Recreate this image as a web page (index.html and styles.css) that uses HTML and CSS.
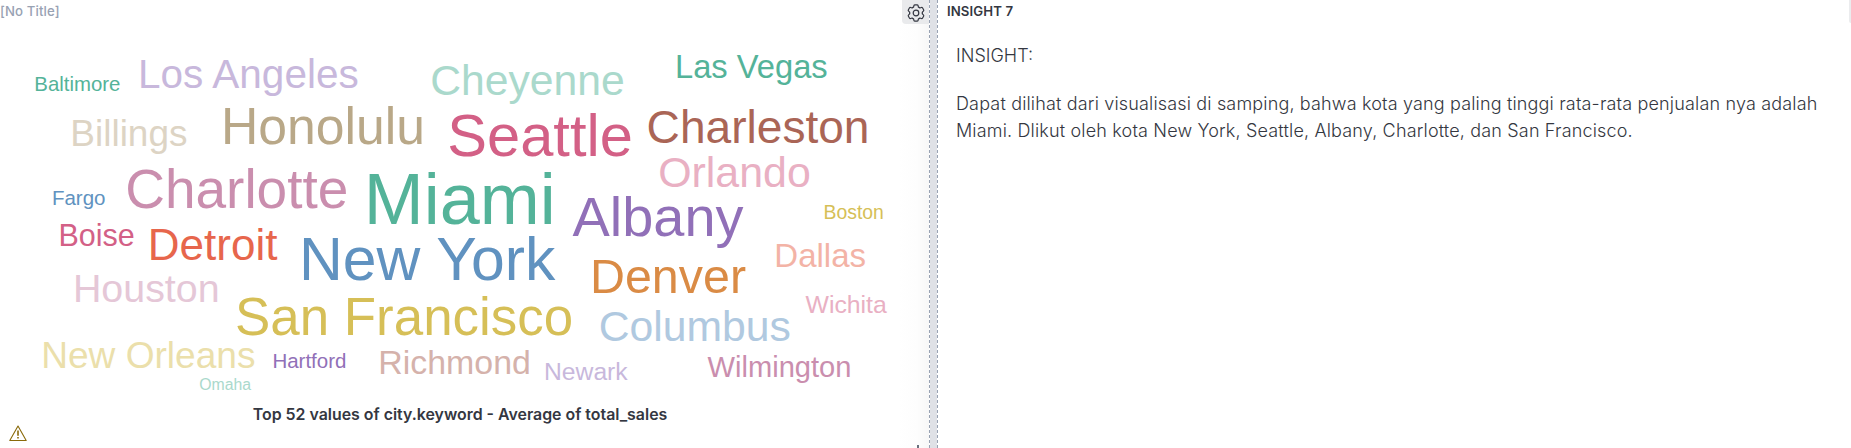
FILE: index.html
```
<!DOCTYPE html>
<html lang="id">
<head>
<meta charset="utf-8">
<title>Dashboard</title>
<link rel="stylesheet" href="styles.css">
</head>
<body>
<main class="dashboard">
  <section class="panel panel-cloud">
    <header class="panel-title untitled">[No Title]</header>
    <button class="gear" aria-label="Panel options">
      <svg width="18" height="18" viewBox="0 0 18 18" fill="none" stroke="#343741" stroke-width="1.2" stroke-linejoin="round" stroke-linecap="round">
        <path id="tooth" d="M5.830 3.500 6.600 3.070 6.900 1.700Q7.100.8 8 .8H10Q10.900.8 11.100 1.700L11.400 3.070 12.170 3.500"/>
        <use href="#tooth" transform="rotate(60 9 9)"/>
        <use href="#tooth" transform="rotate(120 9 9)"/>
        <use href="#tooth" transform="rotate(180 9 9)"/>
        <use href="#tooth" transform="rotate(240 9 9)"/>
        <use href="#tooth" transform="rotate(300 9 9)"/>
        <circle cx="9" cy="9" r="2.800"/>
      </svg>
    </button>
    <svg class="cloud" width="929" height="400" viewBox="0 0 929 400">
      <text x="34.300" y="91" font-size="20.400" fill="#54b399">Baltimore</text>
      <text x="138" y="88" font-size="40.500" fill="#c8b8dc">Los Angeles</text>
      <text x="430.200" y="95" font-size="42.700" fill="#aad9cc">Cheyenne</text>
      <text x="675" y="78.200" font-size="32.700" fill="#54b399">Las Vegas</text>
      <text x="70.300" y="146" font-size="37" fill="#ddd4c4">Billings</text>
      <text x="221" y="144" font-size="51.700" fill="#b9a888">Honolulu</text>
      <text x="447.300" y="156" font-size="59.600" fill="#d36086">Seattle</text>
      <text x="646.600" y="143" font-size="46.100" fill="#aa6556">Charleston</text>
      <text x="658.200" y="187" font-size="42.900" fill="#e9b0c3">Orlando</text>
      <text x="51.900" y="205" font-size="20.500" fill="#6092c0">Fargo</text>
      <text x="125.200" y="208" font-size="55" fill="#ca8eae">Charlotte</text>
      <text x="363.800" y="224.200" font-size="72" fill="#54b399">Miami</text>
      <text x="572.600" y="236" font-size="55.900" fill="#9170b8">Albany</text>
      <text x="823.500" y="219.200" font-size="19.400" fill="#d6bf57">Boston</text>
      <text x="58.400" y="246" font-size="30.500" fill="#d36086">Boise</text>
      <text x="147.800" y="260" font-size="44" fill="#e7664c">Detroit</text>
      <text x="299" y="280" font-size="60.700" fill="#6092c0">New York</text>
      <text x="590" y="293" font-size="48.400" fill="#da8b45">Denver</text>
      <text x="774.300" y="267" font-size="33" fill="#f3b3a6">Dallas</text>
      <text x="72.900" y="301.900" font-size="39.400" fill="#e5c7d7">Houston</text>
      <text x="235" y="335" font-size="52.900" fill="#d6bf57">San Francisco</text>
      <text x="598.700" y="341" font-size="42.700" fill="#b0c9e0">Columbus</text>
      <text x="805.500" y="313" font-size="24.800" fill="#e9b0c3">Wichita</text>
      <text x="41.200" y="368" font-size="37.100" fill="#ebdfab">New Orleans</text>
      <text x="272.400" y="368" font-size="20.500" fill="#9170b8">Hartford</text>
      <text x="378.300" y="374" font-size="33.900" fill="#d5b2ab">Richmond</text>
      <text x="544" y="380" font-size="24.700" fill="#c8b8dc">Newark</text>
      <text x="707.600" y="377" font-size="29.100" fill="#ca8eae">Wilmington</text>
      <text x="199.200" y="390" font-size="15.800" fill="#aad9cc">Omaha</text>
    </svg>
    <p class="cloud-label">Top 52 values of city.keyword - Average of total_sales</p>
    <svg class="warning" width="18" height="17" viewBox="0 0 18 17" fill="none" stroke="#8a6a0a" stroke-width="1.100" stroke-linejoin="round">
      <path d="M9 1 17.200 15.500H.8z"/>
      <path d="M9 5.500v5.300M9 12v1.600" stroke-width="1.600"/>
    </svg>
    <span class="resize"></span>
  </section>
  <section class="panel panel-text">
    <header class="panel-title">INSIGHT 7</header>
    <span class="gear-edge"></span>
    <div class="markdown">
      <p>INSIGHT:</p>
      <p class="prose">Dapat dilihat dari visualisasi di samping, bahwa kota yang paling tinggi rata-rata penjualan nya adalah Miami. Dlikut oleh kota New York, Seattle, Albany, Charlotte, dan San Francisco.</p>
    </div>
  </section>
</main>
</body>
</html>
```
FILE: styles.css
```
body {
  margin: 0;
  font-family: Inter, sans-serif;
  color: #343741;
}
.dashboard {
  display: grid;
  grid-template-columns: 930px 1fr;
  column-gap: 7px;
  height: 448px;
  overflow: hidden;
  background: #dfe1e6;
}
.panel {
  position: relative;
  display: flex;
  flex-direction: column;
  background: #fff;
}
.panel-cloud {
  border-right: 1px dashed #98a2b3;
  background: linear-gradient(to left, #f7f7f7, #fdfdfd 12px, #fff 30px);
}
.panel-text {
  border-left: 1px dashed #98a2b3;
}
.panel-title {
  height: 24px;
  padding-left: 9px;
  font-size: 13.2px;
  font-weight: 600;
  line-height: 23px;
  letter-spacing: 0.1px;
}
.untitled {
  padding-left: 0;
  font-weight: 500;
  color: #98a2b3;
}
.gear {
  position: absolute;
  top: 0;
  right: 0;
  width: 27px;
  height: 24px;
  padding: 2px 0 0 5px;
  border: 0;
  border-radius: 0 0 0 4px;
  background: #e9eaec;
}
.gear svg {
  display: block;
}
.gear-edge {
  position: absolute;
  top: 0;
  right: 0;
  width: 2px;
  height: 23px;
  border-radius: 0 0 0 4px;
  background: #ebecee;
}
.cloud {
  display: block;
  margin-top: -24px;
  font-family: "Liberation Sans", Arial, sans-serif;
}
.cloud-label {
  margin: 3px 0 0;
  padding-right: 9px;
  font-size: 15.9px;
  font-weight: 600;
  line-height: 24px;
  text-align: center;
}
.warning {
  margin: -2px 0 0 9px;
}
.resize {
  position: absolute;
  right: 10px;
  bottom: 0;
  width: 2px;
  height: 3px;
  background: #69707d;
}
.markdown {
  padding: 18px 32px 0 18px;
  font-size: 18px;
  font-weight: 300;
  line-height: 27px;
}
.markdown p {
  margin: 0 0 21px;
}
.markdown .prose {
  letter-spacing: 0.162px;
}
```
